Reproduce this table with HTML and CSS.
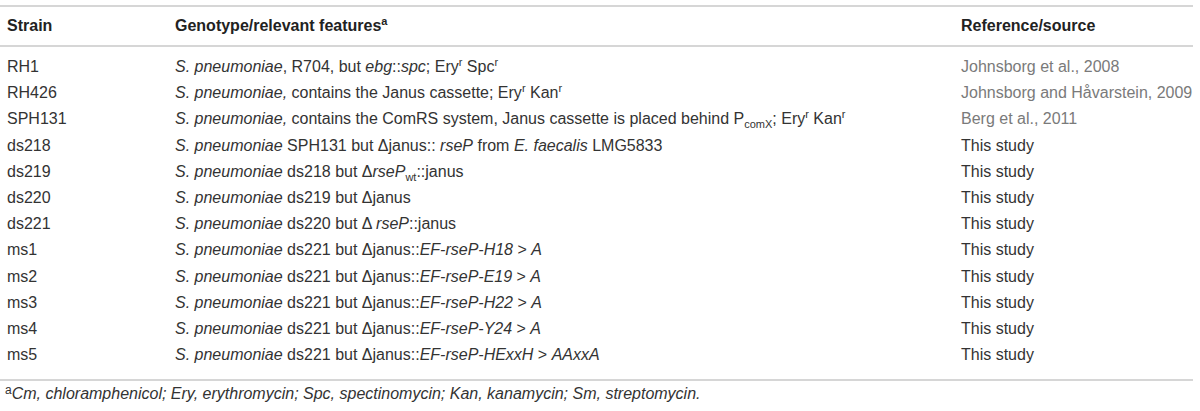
FILE: index.html
```html
<!DOCTYPE html>
<html>
<head>
<meta charset="utf-8">
<link rel="stylesheet" href="styles.css">
</head>
<body>
<div class="wrap">
<table class="strains">
<thead>
<tr>
<th class="c1">Strain</th>
<th class="c2">Genotype/relevant features<sup>a</sup></th>
<th class="c3">Reference/source</th>
</tr>
</thead>
<tbody>
<tr><td>RH1</td><td><i>S. pneumoniae</i>, R704, but <i>ebg</i>::<i>spc</i>; Ery<sup>r</sup> Spc<sup>r</sup></td><td class="ref">Johnsborg et al., 2008</td></tr>
<tr><td>RH426</td><td><i>S. pneumoniae,</i> contains the Janus cassette; Ery<sup>r</sup> Kan<sup>r</sup></td><td class="ref">Johnsborg and Håvarstein, 2009</td></tr>
<tr><td>SPH131</td><td><i>S. pneumoniae,</i> contains the ComRS system, Janus cassette is placed behind P<sub>comX</sub>; Ery<sup>r</sup> Kan<sup>r</sup></td><td class="ref">Berg et al., 2011</td></tr>
<tr><td>ds218</td><td><i>S. pneumoniae</i> SPH131 but Δjanus:: <i>rseP</i> from <i>E. faecalis</i> LMG5833</td><td>This study</td></tr>
<tr><td>ds219</td><td><i>S. pneumoniae</i> ds218 but Δ<i>rseP</i><sub>wt</sub>::janus</td><td>This study</td></tr>
<tr><td>ds220</td><td><i>S. pneumoniae</i> ds219 but Δjanus</td><td>This study</td></tr>
<tr><td>ds221</td><td><i>S. pneumoniae</i> ds220 but Δ <i>rseP</i>::janus</td><td>This study</td></tr>
<tr><td>ms1</td><td><i>S. pneumoniae</i> ds221 but Δjanus::<i>EF-rseP-H18</i> &gt; <i>A</i></td><td>This study</td></tr>
<tr><td>ms2</td><td><i>S. pneumoniae</i> ds221 but Δjanus::<i>EF-rseP-E19</i> &gt; <i>A</i></td><td>This study</td></tr>
<tr><td>ms3</td><td><i>S. pneumoniae</i> ds221 but Δjanus::<i>EF-rseP-H22</i> &gt; <i>A</i></td><td>This study</td></tr>
<tr><td>ms4</td><td><i>S. pneumoniae</i> ds221 but Δjanus::<i>EF-rseP-Y24</i> &gt; <i>A</i></td><td>This study</td></tr>
<tr><td>ms5</td><td><i>S. pneumoniae</i> ds221 but Δjanus::<i>EF-rseP-HExxH</i> &gt; <i>AAxxA</i></td><td>This study</td></tr>
</tbody>
</table>
<p class="note"><sup>a</sup><i>Cm, chloramphenicol; Ery, erythromycin; Spc, spectinomycin; Kan, kanamycin; Sm, streptomycin.</i></p>
</div>
</body>
</html>
```
FILE: styles.css
```css
html, body {
  margin: 0;
  padding: 0;
  background: #fff;
}
body {
  font-family: "Liberation Sans", Arial, Helvetica, sans-serif;
  color: #333;
  font-size: 16px;
}
.wrap {
  padding-top: 5px;
  width: 1193px;
}
.strains {
  width: 1193px;
  border-collapse: collapse;
  table-layout: fixed;
}
.strains th {
  text-align: left;
  font-weight: bold;
  color: #222;
  height: 38px;
  padding: 0;
  line-height: 38px;
  border-top: 2px solid #d6d6d6;
  border-bottom: 2px solid #d6d6d6;
}
.strains th.c1 { width: 168px; padding-left: 7px; }
.strains th.c2 { width: 786px; }
.strains td {
  padding: 0;
  line-height: 26.2px;
  white-space: nowrap;
  vertical-align: middle;
}
.strains td:first-child { padding-left: 7px; }
.strains tbody tr:first-child td { padding-top: 7px; }
.strains tbody tr:last-child td {
  padding-bottom: 11px;
  border-bottom: 2px solid #d6d6d6;
}
.strains td.ref { color: #7a7a7a; }
sup, sub {
  font-size: 11px;
  line-height: 0;
  position: relative;
  vertical-align: baseline;
}
sup { top: -6px; }
sub { top: 4px; }
.note {
  margin: 0;
  padding: 3px 0 0 5px;
  font-size: 16px;
  line-height: 20px;
}
.note sup { font-size: 12px; top: -5px; }
```
